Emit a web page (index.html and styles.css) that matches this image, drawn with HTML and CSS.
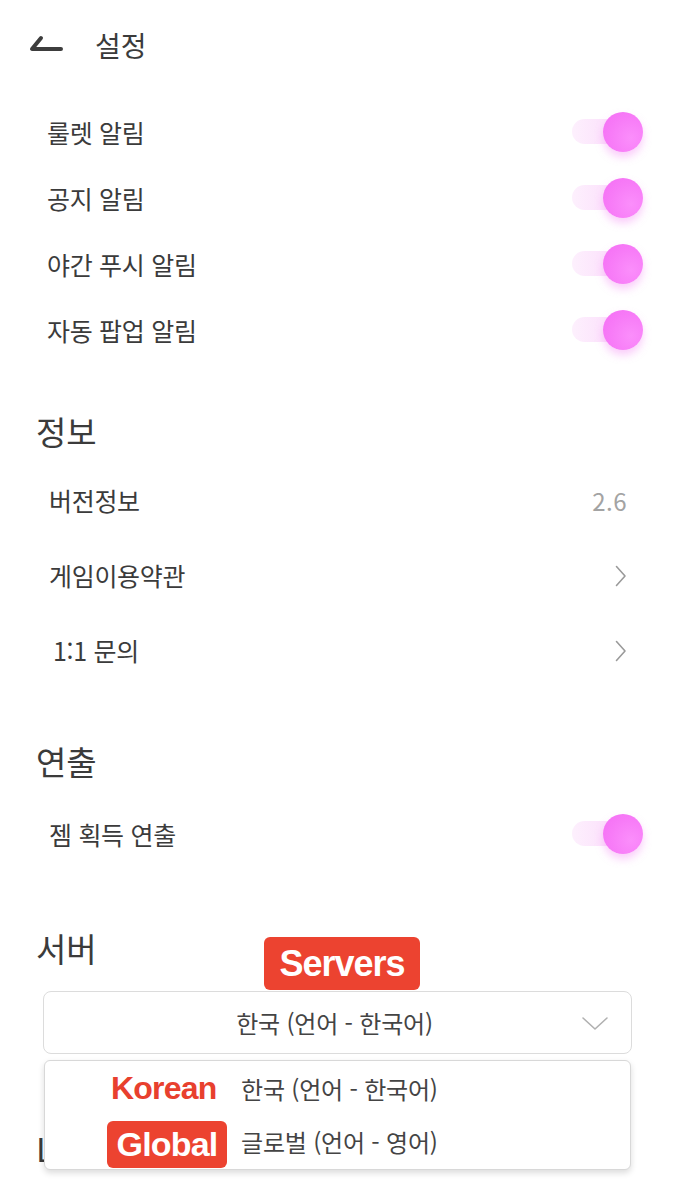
FILE: index.html
```html
<!DOCTYPE html>
<html lang="ko">
<head>
<meta charset="utf-8">
<title>설정</title>
<link rel="stylesheet" href="styles.css">
</head>
<body>
<div class="page">
  <header class="topbar">
    <svg class="back" width="36" height="18" viewBox="0 0 36 18" aria-hidden="true">
      <path d="M13 3 L4 14 L33 14" fill="none" stroke="#3d3d3d" stroke-width="4" stroke-linecap="round" stroke-linejoin="round"/>
    </svg>
    <h1 class="title">설정</h1>
  </header>

  <ul class="list toggles">
    <li class="row"><span class="label">룰렛 알림</span><span class="switch"><span class="track"></span><span class="knob"></span></span></li>
    <li class="row"><span class="label">공지 알림</span><span class="switch"><span class="track"></span><span class="knob"></span></span></li>
    <li class="row"><span class="label">야간 푸시 알림</span><span class="switch"><span class="track"></span><span class="knob"></span></span></li>
    <li class="row"><span class="label">자동 팝업 알림</span><span class="switch"><span class="track"></span><span class="knob"></span></span></li>
  </ul>

  <h2 class="section-title info-title">정보</h2>
  <ul class="list info">
    <li class="info-row"><span class="label">버전정보</span><span class="value">2.6</span></li>
    <li class="info-row"><span class="label">게임이용약관</span>
      <svg class="chev" width="12" height="22" viewBox="0 0 12 22" aria-hidden="true"><path d="M1.5 1.5 L10 11 L1.5 20.5" fill="none" stroke="#9a9a9a" stroke-width="1.6" stroke-linecap="round" stroke-linejoin="round"/></svg>
    </li>
    <li class="info-row"><span class="label qa">1:1 문의</span>
      <svg class="chev" width="12" height="22" viewBox="0 0 12 22" aria-hidden="true"><path d="M1.5 1.5 L10 11 L1.5 20.5" fill="none" stroke="#9a9a9a" stroke-width="1.6" stroke-linecap="round" stroke-linejoin="round"/></svg>
    </li>
  </ul>

  <h2 class="section-title effect-title">연출</h2>
  <ul class="list toggles">
    <li class="row"><span class="label gem">젬 획득 연출</span><span class="switch"><span class="track"></span><span class="knob"></span></span></li>
  </ul>

  <section class="server">
    <h2 class="section-title server-title">서버</h2>
    <span class="badge servers-badge">Servers</span>
    <div class="select-wrap">
      <div class="select">
        <span class="select-text">한국 (언어 - 한국어)</span>
        <svg class="select-chev" width="28" height="16" viewBox="0 0 28 16" aria-hidden="true"><path d="M2 2 L14 13 L26 2" fill="none" stroke="#b0b0b0" stroke-width="1.6" stroke-linecap="round" stroke-linejoin="round"/></svg>
      </div>
      <div class="dropdown">
        <div class="option"><span class="opt-tag"><span class="tag-text">Korean</span></span><span class="opt-text">한국 (언어 - 한국어)</span></div>
        <div class="option"><span class="opt-tag"><span class="badge tag-badge">Global</span></span><span class="opt-text">글로벌 (언어 - 영어)</span></div>
      </div>
    </div>
    <h2 class="section-title lang-title">L</h2>
  </section>
</div>
</body>
</html>
```

FILE: styles.css
```css
* { box-sizing: border-box; }
html, body { margin: 0; padding: 0; background: #ffffff; }
body {
  font-family: "Noto Sans CJK KR", "Noto Sans", sans-serif;
  color: #3b3b3b;
  width: 675px;
  height: 1200px;
  overflow: hidden;
}
.page { width: 675px; }

.topbar {
  height: 90px;
  display: flex;
  align-items: center;
  padding-left: 28px;
}
.back { display: block; margin-top: -2px; }
.title {
  margin: 0 0 0 31px;
  font-size: 28px;
  font-weight: 400;
  line-height: 1;
  color: #3b3b3b;
}

.list { list-style: none; margin: 0; padding: 0; }
.toggles { padding-top: 9px; }
.row {
  height: 66px;
  display: flex;
  align-items: center;
  justify-content: space-between;
  padding: 0 32px 0 47px;
}
.label { font-size: 25px; line-height: 1; color: #3b3b3b; letter-spacing: -0.3px; }
.switch {
  position: relative;
  width: 71px;
  height: 40px;
  flex: none;
}
.track {
  position: absolute;
  left: 0; top: 7px;
  width: 56px; height: 25px;
  border-radius: 13px;
  background: linear-gradient(90deg, #fdf0fd, #fbd9fb);
}
.knob {
  position: absolute;
  right: 0; top: 0;
  width: 40px; height: 40px;
  border-radius: 50%;
  background: radial-gradient(circle at 70% 65%, #fb8efb 0%, #f77bf7 55%, #f46ef4 100%);
  box-shadow: 0 5px 9px rgba(240, 110, 240, 0.35);
}

.section-title {
  margin: 0;
  padding-left: 36px;
  height: 50px;
  display: flex;
  align-items: center;
  font-size: 33px;
  font-weight: 400;
  color: #3b3b3b;
}
.info-title { margin-top: 43px; }
.info { padding-top: 7px; }
.info-row {
  height: 75px;
  display: flex;
  align-items: center;
  justify-content: space-between;
  padding: 0 48px 0 49px;
}
.qa { padding-left: 4px; }
.value { font-size: 24px; color: #a3a3a3; letter-spacing: 0.5px; }
.chev { display: block; }

.effect-title { margin-top: 48px; }
.effect-title + .toggles { padding-top: 15px; }
.gem { padding-left: 2px; }

.server { position: relative; margin-top: 56px; }
.badge {
  display: inline-flex;
  align-items: center;
  justify-content: center;
  background: #ec4330;
  color: #ffffff;
  font-family: "Liberation Sans", Arial, sans-serif;
  font-weight: 700;
  border-radius: 6px;
}
.servers-badge {
  position: absolute;
  left: 264px;
  top: 14px;
  width: 156px;
  height: 53px;
  font-size: 36px;
  letter-spacing: -1px;
  z-index: 2;
}
.select-wrap {
  position: relative;
  margin: 18px 43px 0 43px;
}
.select {
  height: 63px;
  border: 1px solid #dcdcdc;
  border-radius: 8px;
  display: flex;
  align-items: center;
  justify-content: center;
  position: relative;
  background: #fff;
}
.select-text { font-size: 24px; color: #444; line-height: 1; margin-left: -6px; letter-spacing: -0.2px; }
.select-chev { position: absolute; right: 22px; top: 24px; }

.dropdown {
  position: absolute;
  left: 1px;
  right: 1px;
  top: calc(100% + 6px);
  height: 110px;
  background: #fff;
  border: 1px solid #d8d8d8;
  border-radius: 6px;
  box-shadow: 0 3px 6px rgba(0, 0, 0, 0.14);
  z-index: 3;
  display: flex;
  flex-direction: column;
}
.option {
  height: 55px;
  display: flex;
  align-items: center;
  padding-left: 62px;
}
.opt-tag { width: 134px; flex: none; display: flex; align-items: center; }
.tag-text {
  color: #e8402e;
  font-family: "Liberation Sans", Arial, sans-serif;
  font-weight: 700;
  font-size: 32px;
  letter-spacing: -0.8px;
  padding-left: 4px;
}
.tag-badge {
  width: 120px;
  height: 47px;
  font-size: 34px;
  letter-spacing: -0.8px;
  margin-top: 4px;
}
.opt-text { font-size: 24px; color: #444; line-height: 1; letter-spacing: -0.2px; }
.option:first-child .opt-text { margin-top: 2px; }

.lang-title { margin-top: 69px; }
```
